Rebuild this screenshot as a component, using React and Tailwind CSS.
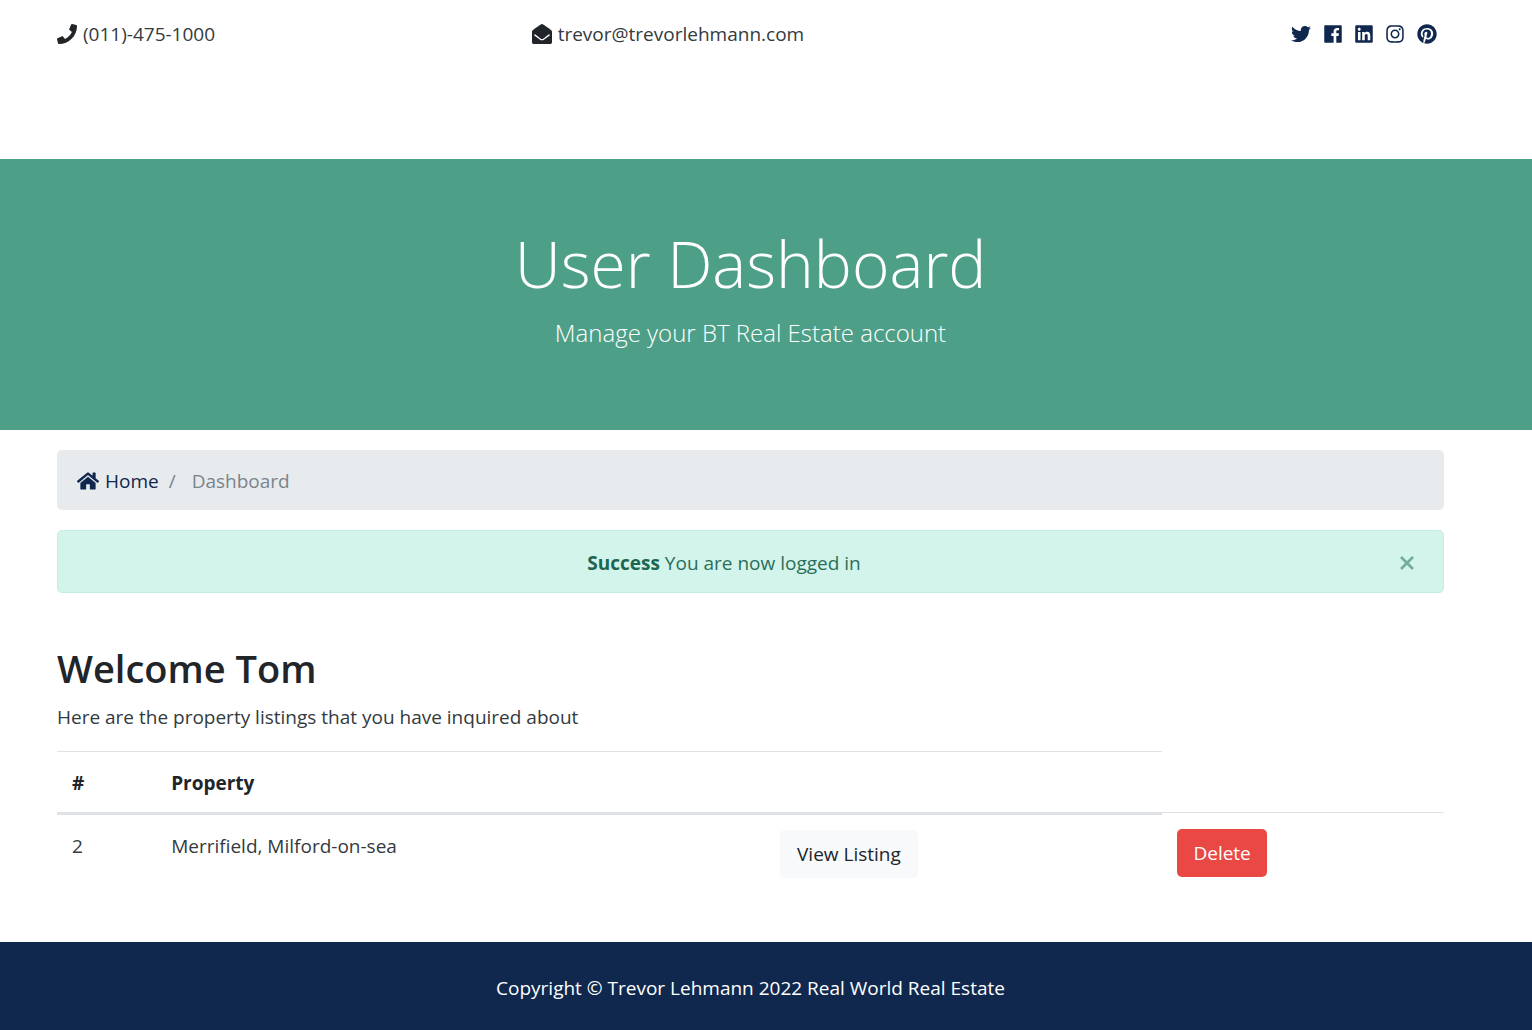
import { useState } from "react";
import { FaPhone, FaEnvelopeOpen, FaTwitter, FaLinkedin, FaInstagram, FaPinterest } from "react-icons/fa";

function Facebook(props) {
  return (
    <svg viewBox="0 0 448 512" width="1em" height="1em" fill="currentColor" {...props}>
      <path d="M448 56.7v398.5c0 13.7-11.1 24.7-24.7 24.7H309.1V306.5h58.2l8.7-67.6h-67v-43.2c0-19.6 5.4-32.9 33.5-32.9h35.8v-60.5c-6.2-.8-27.4-2.7-52.2-2.7-51.6 0-87 31.5-87 89.4v49.9h-58.4v67.6h58.4V480H24.7C11.1 480 0 468.9 0 455.3V56.7C0 43.1 11.1 32 24.7 32h398.5c13.7 0 24.8 11.1 24.8 24.7z" />
    </svg>
  );
}

function House(props) {
  return (
    <svg viewBox="0 0 576 512" width="1em" height="1em" fill="currentColor" {...props}>
      <path d="M488 312.7V456c0 13.3-10.7 24-24 24H348c-6.6 0-12-5.4-12-12V356c0-6.6-5.4-12-12-12h-72c-6.6 0-12 5.4-12 12v112c0 6.6-5.4 12-12 12H112c-13.3 0-24-10.7-24-24V312.7c0-3.6 1.6-7 4.4-9.3l188-154.8c4.4-3.6 10.8-3.6 15.3 0l188 154.8c2.7 2.3 4.3 5.7 4.3 9.3zm83.6-60.9L488 182.9V44.4c0-6.6-5.4-12-12-12h-56c-6.6 0-12 5.4-12 12V117l-89.5-73.7c-17.7-14.6-43.3-14.6-61 0L4.4 251.8c-5.1 4.2-5.8 11.8-1.6 16.9l25.5 31c4.2 5.1 11.8 5.8 16.9 1.6l235.2-193.7c4.4-3.6 10.8-3.6 15.3 0l235.2 193.7c5.1 4.2 12.7 3.5 16.9-1.6l25.5-31c4.2-5.2 3.4-12.7-1.7-16.9z" />
    </svg>
  );
}

const socials = [
  { name: "Twitter", Icon: FaTwitter, size: "w-5" },
  { name: "Facebook", Icon: Facebook, size: "w-[18px]" },
  { name: "LinkedIn", Icon: FaLinkedin, size: "w-[18px]" },
  { name: "Instagram", Icon: FaInstagram, size: "w-[18px]" },
  { name: "Pinterest", Icon: FaPinterest, size: "w-5" },
];

const container = "ml-[57px] mr-[88px]";

export default function App() {
  const [alertOpen, setAlertOpen] = useState(true);

  return (
    <div className="flex min-h-screen flex-col bg-white font-['Open_Sans',sans-serif] text-[19px] leading-[30px] text-[#333a40]">
      <header className="pt-[19px] pb-[110px]">
        <div className={`${container} grid grid-cols-3 items-center gap-[37px]`}>
          <div className="flex items-center gap-1.5">
            <FaPhone className="size-5 text-[#212529]" />
            (011)-475-1000
          </div>
          <div className="flex items-center gap-1.5">
            <FaEnvelopeOpen className="size-5 text-[#212529]" />
            trevor@trevorlehmann.com
          </div>
          <nav className="flex items-center justify-end gap-[13px] pr-[7px] text-[#10284e]" aria-label="Social">
            {socials.map(({ name, Icon, size }) => (
              <a key={name} href="#" aria-label={name}>
                <Icon className={`${size} h-5`} />
              </a>
            ))}
          </nav>
        </div>
      </header>

      <section className="bg-[#4d9f88] pt-[65px] pb-20 text-center font-light text-white">
        <div className={container}>
          <h1 className="text-[64px] leading-[80px]">User Dashboard</h1>
          <p className="mt-[11px] text-[24px] leading-[35px]">Manage your BT Real Estate account</p>
        </div>
      </section>

      <main className={`${container} flex-1 pt-5 pb-12`}>
        <nav aria-label="Breadcrumb" className="rounded-[5px] bg-[#e7ebee] px-5 pt-4 pb-3.5">
          <ol className="flex items-center">
            <li>
              <a href="#" className="flex items-center gap-1.5 text-[#10284e]">
                <House className="size-[22px]" />
                Home
              </a>
            </li>
            <li className="flex items-center gap-4 pl-2.5 text-[#7b838a]">
              <span>/</span>
              Dashboard
            </li>
          </ol>
        </nav>

        {alertOpen && (
          <div role="alert" className="mt-5 flex items-center rounded-[5px] border border-[#c4eee0] bg-[#d2f4ea] pt-[17px] pb-3.5 pl-5 text-[#2b6e5b]">
            <p className="flex-1 text-center">
              <strong className="font-bold text-[#1d6650]">Success</strong> You are now logged in
            </p>
            <button type="button" aria-label="Close" onClick={() => setAlertOpen(false)} className="flex w-[73px] justify-center text-[#74ab9b]">
              <svg viewBox="0 0 14 14" className="size-3.5" fill="none" stroke="currentColor" strokeWidth="2.6">
                <path d="M1 1l12 12M13 1l-12 12" />
              </svg>
            </button>
          </div>
        )}

        <h2 className="mt-[51px] text-[38px] leading-12 font-semibold text-[#212529]">Welcome Tom</h2>
        <p className="mt-2.5">Here are the property listings that you have inquired about</p>

        <table className="mt-[19px] w-full table-fixed border-separate border-spacing-0 text-left">
          <colgroup>
            <col className="w-[7.15%]" />
            <col className="w-[43.9%]" />
            <col className="w-[28.65%]" />
            <col />
          </colgroup>
          <thead className="text-[#212529]">
            <tr>
              <th scope="col" className="border-t border-[#dee2e6] px-[15px] pt-4 pb-3.5 font-bold">#</th>
              <th scope="col" className="border-t border-[#dee2e6] px-[15px] pt-4 pb-3.5 font-bold">Property</th>
              <th scope="col" className="border-t border-[#dee2e6] px-[15px] pt-4 pb-3.5"></th>
            </tr>
          </thead>
          <tbody className="align-top">
            <tr>
              <td className="border-t-3 border-[#dee2e6] px-[15px] pt-4">2</td>
              <td className="border-t-3 border-[#dee2e6] px-[15px] pt-4">Merrifield, Milford-on-sea</td>
              <td className="border-t-3 border-[#dee2e6] px-[15px] pt-[15px] pb-4">
                <a href="#" className="block w-fit rounded-[5px] bg-[#f8f9fb] px-[17px] py-[9px] text-[#212529]">View Listing</a>
              </td>
              <td className="border-t border-[#dee2e6] px-[15px] pt-4 pb-4">
                <button type="button" className="block rounded-[5px] bg-[#e94845] px-4 py-[9px] text-white">Delete</button>
              </td>
            </tr>
          </tbody>
        </table>
      </main>

      <footer className="bg-[#10284e] pt-[31px] pb-[27px] text-center text-white">
        <p className={container}>Copyright © Trevor Lehmann 2022 Real World Real Estate</p>
      </footer>
    </div>
  );
}
